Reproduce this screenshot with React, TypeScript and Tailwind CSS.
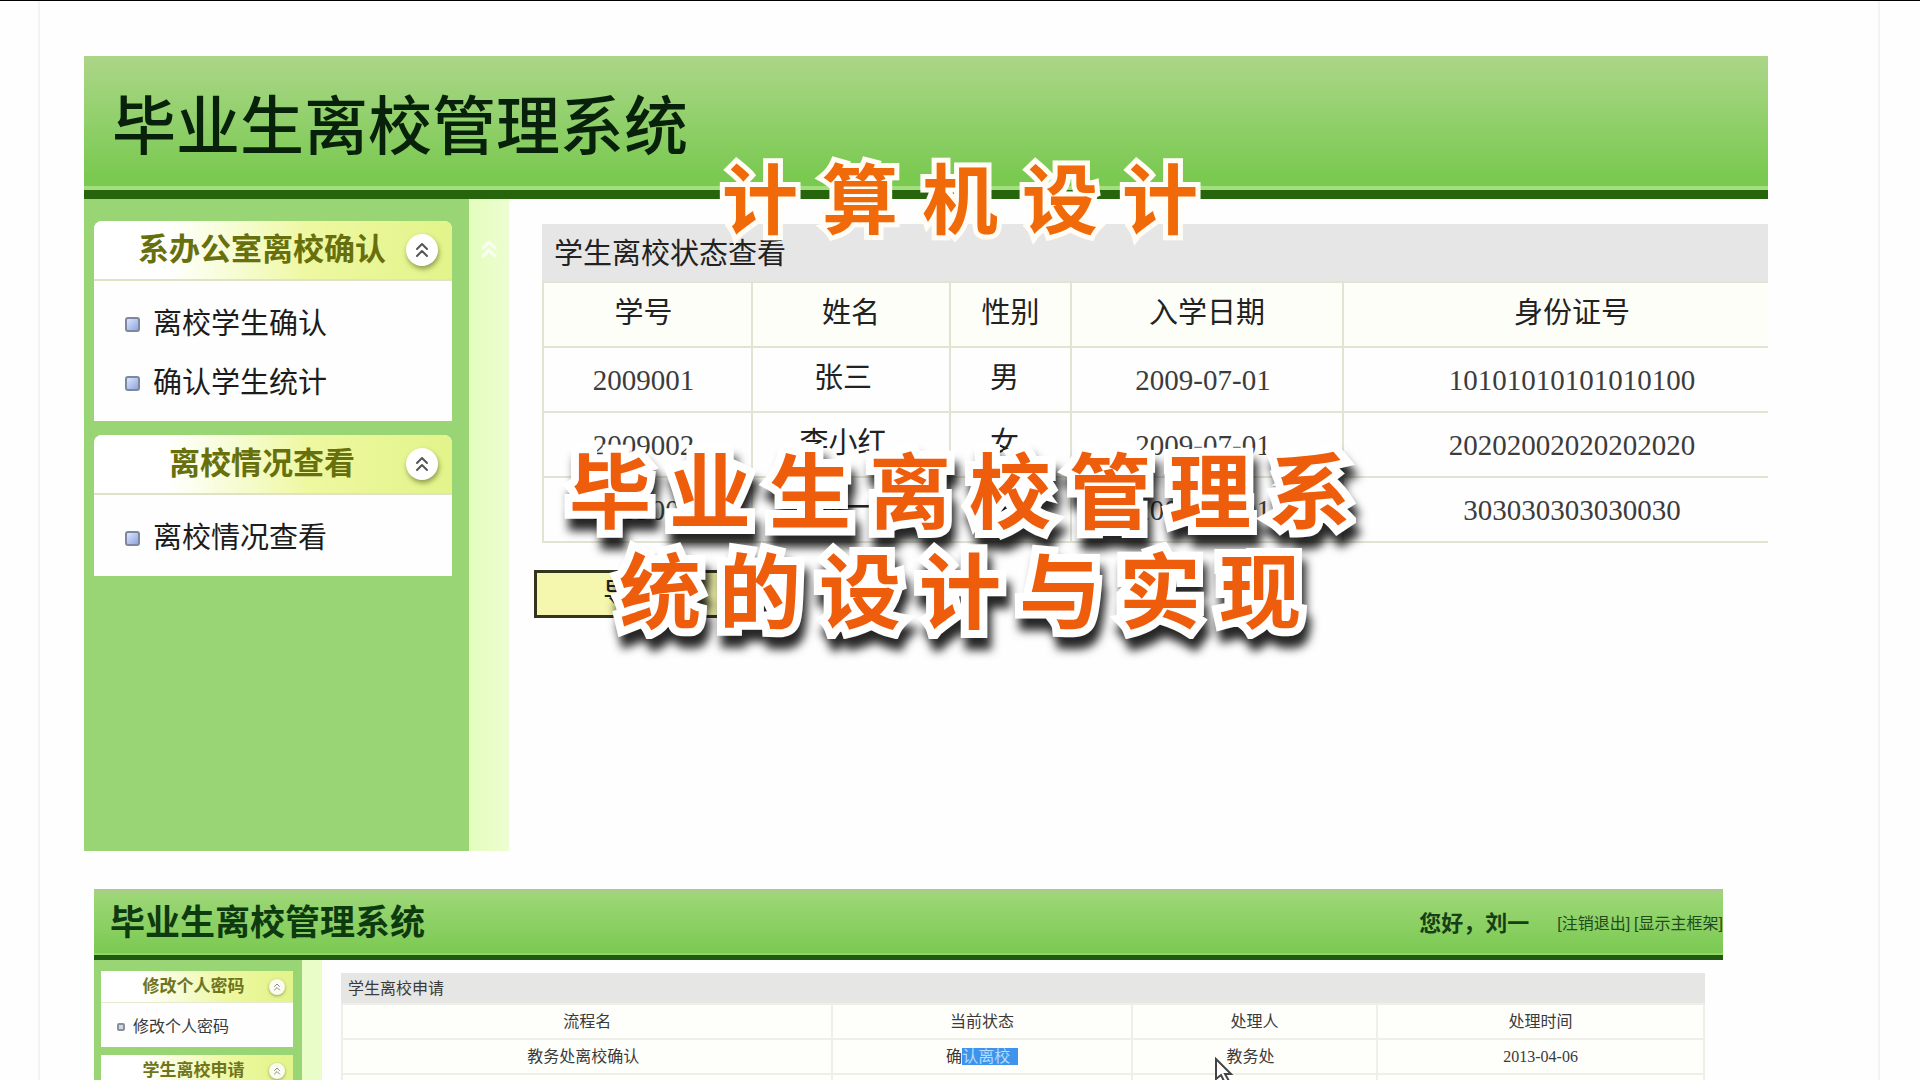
import { ChevronsUp } from 'lucide-react'

const MAIN_MENU = [
  { title: '系办公室离校确认', items: ['离校学生确认', '确认学生统计'] },
  { title: '离校情况查看', items: ['离校情况查看'] },
]

const SUB_MENU = [
  { title: '修改个人密码', items: ['修改个人密码'] },
  { title: '学生离校申请', items: [] as string[] },
]

const STUDENTS = [
  { id: '2009001', name: '张三', sex: '男', date: '2009-07-01', card: '10101010101010100' },
  { id: '2009002', name: '李小红', sex: '女', date: '2009-07-01', card: '20202002020202020' },
  { id: '2009003', name: '刘一', sex: '男', date: '2009-07-01', card: '303030303030030' },
]

const CAPTION_LINES = ['毕业生离校管理系', '统的设计与实现']

function MainMenu() {
  return (
    <aside className="flex w-[385px] shrink-0 flex-col gap-[14px] bg-[#9ad575] pt-[22px] pr-[17px] pl-[10px]">
      {MAIN_MENU.map((group) => (
        <section key={group.title} className="overflow-hidden rounded-t-lg bg-[#fefefe]">
          <h2 className="flex h-[60px] items-center border-b-2 border-[#dfe2c4] bg-linear-to-r from-white from-20% via-[#eef8a0] via-60% to-[#e2f48a] pr-[14px] pl-6">
            <span className="flex-1 text-center text-[31px] leading-9 font-bold text-[#67700c]">{group.title}</span>
            <button
              type="button"
              aria-label={group.title}
              className="flex size-8 items-center justify-center rounded-full bg-white text-[#555] shadow-[1px_3px_5px_rgba(90,100,40,0.6)]"
            >
              <ChevronsUp className="size-6" strokeWidth={2} />
            </button>
          </h2>
          <ul className="px-[31px] pt-[14px] pb-2">
            {group.items.map((item) => (
              <li key={item}>
                <a href="#" className="flex h-[59px] items-center gap-[13px] text-[29px] text-[#1c1c1c]">
                  <span className="size-[15px] rounded-[3px] border-2 border-[#7c87a0] bg-linear-to-br from-[#dde6ff] to-[#8fa5dc]" />
                  {item}
                </a>
              </li>
            ))}
          </ul>
        </section>
      ))}
    </aside>
  )
}

function StudentTable() {
  return (
    <table className="w-full table-fixed border-collapse text-center text-[29px] leading-9 text-[#222]">
      <caption className="h-[57px] bg-[#e6e6e6] pt-3 pl-3 text-left">学生离校状态查看</caption>
      <colgroup>
        <col className="w-[209px]" />
        <col className="w-[198px]" />
        <col className="w-[121px]" />
        <col className="w-[272px]" />
        <col />
      </colgroup>
      <thead>
        <tr className="h-[65px] border-y-2 border-[#e2e3d3] bg-[#fefef8]">
          <th className="border-x-2 border-[#e2e3d3] pr-2 pb-1 font-normal">学号</th>
          <th className="border-x-2 border-[#e2e3d3] pb-1 font-normal">姓名</th>
          <th className="border-x-2 border-[#e2e3d3] pb-1 font-normal">性别</th>
          <th className="border-x-2 border-[#e2e3d3] pb-1 font-normal">入学日期</th>
          <th className="pb-1 pl-8 font-normal">身份证号</th>
        </tr>
      </thead>
      <tbody>
        {STUDENTS.map((s) => (
          <tr key={s.id} className="h-[65px] border-y-2 border-[#e2e3d3]">
            <td className="border-x-2 border-[#e2e3d3] pr-2 font-['Liberation_Serif',serif] text-[#3c3c3c]">{s.id}</td>
            <td className="border-x-2 border-[#e2e3d3] pr-4 pb-1">{s.name}</td>
            <td className="border-x-2 border-[#e2e3d3] pr-3 pb-1">{s.sex}</td>
            <td className="border-x-2 border-[#e2e3d3] pr-2 font-['Liberation_Serif',serif] text-[#3c3c3c]">{s.date}</td>
            <td className="pl-8 font-['Liberation_Serif',serif] text-[#3c3c3c]">{s.card}</td>
          </tr>
        ))}
      </tbody>
    </table>
  )
}

function ConfirmPage() {
  return (
    <div className="mr-[110px] ml-11">
      <header className="flex h-[143px] items-center border-b-[9px] border-[#26650b] bg-linear-to-b from-[#acd588] via-[#98d273] via-35% to-[#7ac950] to-90% pt-2 pl-7 shadow-[inset_0_-4px_0_#a3df7c]">
        <h1 className="text-[64px] leading-none font-medium text-[#08210a]">毕业生离校管理系统</h1>
      </header>
      <div className="flex h-[652px]">
        <MainMenu />
        <div className="flex w-[40px] shrink-0 justify-center bg-linear-to-r from-[#e4fdbc] to-[#edfdd2] pt-9 text-white/70">
          <ChevronsUp className="size-7" strokeWidth={3} />
        </div>
        <main className="min-w-0 flex-1 pt-[25px] pl-[33px]">
          <StudentTable />
          <button
            type="button"
            className="mt-[27px] -ml-2 h-12 w-[196px] border-[3px] border-[#33351f] bg-[#f5f7ae] text-[29px] leading-9 text-[#222]"
          >
            导出
          </button>
        </main>
      </div>
    </div>
  )
}

function SubMenu() {
  return (
    <aside className="flex w-[208px] shrink-0 flex-col gap-2 bg-[#9ad575] pt-[11px] pr-[9px] pl-[7px]">
      {SUB_MENU.map((group) => (
        <section key={group.title} className="bg-[#fefefe]">
          <h2 className="flex h-8 items-center border-b border-[#e6ead0] bg-linear-to-r from-white from-20% via-[#eef8a0] via-65% to-[#e2f48a] pr-2 pl-[17px]">
            <span className="flex-1 text-center text-[17px] leading-6 font-bold text-[#6f7420]">{group.title}</span>
            <button
              type="button"
              aria-label={group.title}
              className="flex size-4 items-center justify-center rounded-full bg-[#fbfbf0] text-[#888] shadow-[0_1px_3px_rgba(90,100,40,0.6)]"
            >
              <ChevronsUp className="size-3" />
            </button>
          </h2>
          <ul className="min-h-11 pt-1 pl-4">
            {group.items.map((item) => (
              <li key={item}>
                <a href="#" className="flex h-10 items-center gap-2 text-[16px] text-[#3a3a3a]">
                  <span className="size-2 rounded-xs border-2 border-[#8a8f9c] bg-[#cfd6e6]" />
                  {item}
                </a>
              </li>
            ))}
          </ul>
        </section>
      ))}
    </aside>
  )
}

function ApplyTable() {
  return (
    <table className="w-full table-fixed border-collapse border border-[#e8e9df] bg-[#fefefa] text-center text-[16px] leading-5 text-[#3a3a3a]">
      <caption className="h-[30px] bg-[#e6e6e4] pt-[6px] pl-[7px] text-left">学生离校申请</caption>
      <colgroup>
        <col className="w-[36%]" />
        <col className="w-[22%]" />
        <col className="w-[18%]" />
        <col />
      </colgroup>
      <thead>
        <tr className="h-[35px]">
          <th className="border-2 border-[#eeefe6] font-normal">流程名</th>
          <th className="border-2 border-[#eeefe6] font-normal">当前状态</th>
          <th className="border-2 border-[#eeefe6] font-normal">处理人</th>
          <th className="border-2 border-[#eeefe6] font-normal">处理时间</th>
        </tr>
      </thead>
      <tbody>
        <tr className="h-[35px]">
          <td className="border-2 border-[#eeefe6] pr-2">教务处离校确认</td>
          <td className="border-2 border-[#eeefe6]">
            确<span className="bg-[#3d94ea] pr-2 text-[#b4dcff]">认离校</span>
          </td>
          <td className="border-2 border-[#eeefe6] pr-2">教务处</td>
          <td className="border-2 border-[#eeefe6] font-['Liberation_Serif',serif]">2013-04-06</td>
        </tr>
        <tr className="h-[35px]">
          <td className="border-2 border-[#eeefe6]" />
          <td className="border-2 border-[#eeefe6]" />
          <td className="border-2 border-[#eeefe6]" />
          <td className="border-2 border-[#eeefe6]" />
        </tr>
      </tbody>
    </table>
  )
}

function ApplyPage() {
  return (
    <div className="mt-[38px] mr-[155px] ml-[54px]">
      <header className="flex h-[71px] items-center border-t-4 border-b-[5px] border-t-[#a9cd86] border-b-[#1f5a10] bg-linear-to-b from-[#9dd777] to-[#7ac950] pl-4 shadow-[inset_0_-2px_0_#93d468]">
        <h1 className="flex-1 pb-1 text-[35px] leading-none font-bold text-[#0e3a10]">毕业生离校管理系统</h1>
        <p className="mr-7 text-[22px] leading-8 font-bold text-[#173f16]">您好，刘一</p>
        <nav className="flex gap-1 text-[16px] leading-8 text-[#1f4a1b]">
          <a href="#">[注销退出]</a>
          <a href="#">[显示主框架]</a>
        </nav>
      </header>
      <div className="flex">
        <SubMenu />
        <div className="w-5 shrink-0 bg-[#e9fdc8]" />
        <div className="min-w-0 flex-1 pt-[13px] pr-[18px] pl-[19px]">
          <ApplyTable />
        </div>
      </div>
    </div>
  )
}

export default function App() {
  return (
    <div className="relative h-screen overflow-hidden border-t border-black bg-[#fefefe] font-['Liberation_Sans','Noto_Sans_CJK_SC',sans-serif]">
      <div className="mr-10 ml-[38px] border-x-2 border-[#f3f3f3] pt-[55px]">
        <ConfirmPage />
        <ApplyPage />
      </div>

      {/* Captions over the page */}
      <p className="absolute inset-x-0 top-[156px] flex justify-center gap-6 text-[76px] leading-[90px] font-bold text-[#f06a0a] [paint-order:stroke_fill] [stroke-linejoin:round] [-webkit-text-stroke:10px_#fffdf6]">
        {Array.from('计算机设计').map((char, i) => (
          <span key={i}>{char}</span>
        ))}
      </p>
      <div className="absolute inset-x-0 top-[443px] text-[82px] leading-[100px] font-bold text-[#ee5d0c] drop-shadow-[4px_12px_5px_rgba(0,0,0,0.85)] [paint-order:stroke_fill] [stroke-linejoin:round] [-webkit-text-stroke:16px_white]">
        {CAPTION_LINES.map((line) => (
          <p key={line} className="flex justify-center gap-[18px]">
            {Array.from(line).map((char) => (
              <span key={char}>{char}</span>
            ))}
          </p>
        ))}
      </div>

      {/* Mouse pointer */}
      <svg className="absolute top-[1056px] left-[1214px] h-7 w-5" viewBox="0 0 20 28">
        <path d="M2 2v20l5-4 4 8 4-2-4-7h6z" fill="white" stroke="#444" strokeWidth="2" />
      </svg>
    </div>
  )
}
